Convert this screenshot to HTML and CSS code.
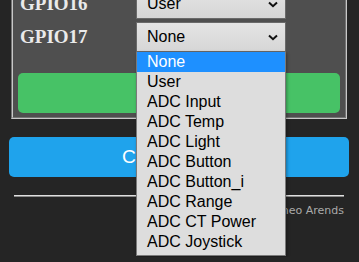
FILE: index.html
```html
<!DOCTYPE html>
<html lang="en">
<head>
  <meta charset="UTF-8">
  <title>Configure Module</title>
  <link rel="stylesheet" href="styles.css">
</head>
<body>
  <div class="wrap">
    <fieldset class="box">
      <div class="row">
        <div class="label">GPIO16</div>
        <div class="select">
          <span>User</span>
          <svg class="arrow" width="10" height="7" viewBox="0 0 10 7"><path d="M1 1.5 L5 5.2 L9 1.5" fill="none" stroke="#111" stroke-width="2"/></svg>
        </div>
      </div>
      <div class="row">
        <div class="label">GPIO17</div>
        <div class="select">
          <span>None</span>
          <svg class="arrow" width="10" height="7" viewBox="0 0 10 7"><path d="M1 1.5 L5 5.2 L9 1.5" fill="none" stroke="#111" stroke-width="2"/></svg>
          <ul class="popup">
            <li class="active">None</li>
            <li>User</li>
            <li>ADC Input</li>
            <li>ADC Temp</li>
            <li>ADC Light</li>
            <li>ADC Button</li>
            <li>ADC Button_i</li>
            <li>ADC Range</li>
            <li>ADC CT Power</li>
            <li>ADC Joystick</li>
          </ul>
        </div>
      </div>
      <button class="btn bgrn">Save</button>
    </fieldset>
    <button class="btn">Configuration</button>
    <hr>
    <div class="footer">Tasmota 9.1.0 by Theo Arends</div>
  </div>
</body>
</html>
```

FILE: styles.css
```css
body {
  margin: 0;
  background: #252525;
  font-family: "DejaVu Sans", sans-serif;
}

.wrap {
  width: 340px;
  margin: -13px 0 0 9px;
  padding-bottom: 40px;
  color: #eaeaea;
}

.box {
  margin: 0 2px;
  padding: 0 5px 4px;
  border: 2px groove #c8c8c8;
  background: #4f4f4f;
}

.row {
  display: flex;
  align-items: center;
  height: 30px;
  margin-bottom: 3px;
}

.label {
  width: 116px;
  padding-left: 2px;
  font-family: "Liberation Serif", serif;
  font-weight: bold;
  font-size: 19px;
}

.select {
  position: relative;
  box-sizing: border-box;
  width: 150px;
  height: 30px;
  border: 1px solid #6a6a6a;
  background: linear-gradient(#e4e4e4, #d6d6d6);
  color: #000;
  font-family: "Liberation Sans", sans-serif;
  font-size: 16px;
  display: flex;
  align-items: center;
  padding-left: 10px;
}

.arrow {
  position: absolute;
  right: 7px;
  top: 11px;
}

.popup {
  position: absolute;
  top: 29px;
  left: -1px;
  width: 150px;
  box-sizing: border-box;
  margin: 0;
  padding: 0 0 3px;
  list-style: none;
  background: #dddddd;
  border: 1px solid #7a7a7a;
  border-top: 0;
  box-shadow: 1px 1px 3px rgba(0,0,0,0.35);
  z-index: 5;
}

.popup li {
  height: 20px;
  line-height: 20px;
  padding-left: 10px;
  color: #000;
}

.popup li.active {
  background: #1e90ff;
  color: #fff;
}

.btn {
  display: block;
  width: 100%;
  height: 40px;
  border: 0;
  border-radius: 5px;
  background: #1fa3ec;
  color: #fff;
  font-family: "Liberation Sans", sans-serif;
  font-size: 19.2px;
  padding: 0;
}

.bgrn {
  background: #47c266;
  margin-top: 21px;
}

.box + .btn {
  margin-top: 18px;
}

hr {
  width: 330px;
  height: 0;
  margin: 18px auto 0;
  border: 0;
  border-top: 1px solid #e0e0e0;
  border-bottom: 1px solid #8a8a8a;
}

.footer {
  text-align: right;
  font-size: 11px;
  color: #aaa;
  padding: 7px 5px 0 0;
}
```
